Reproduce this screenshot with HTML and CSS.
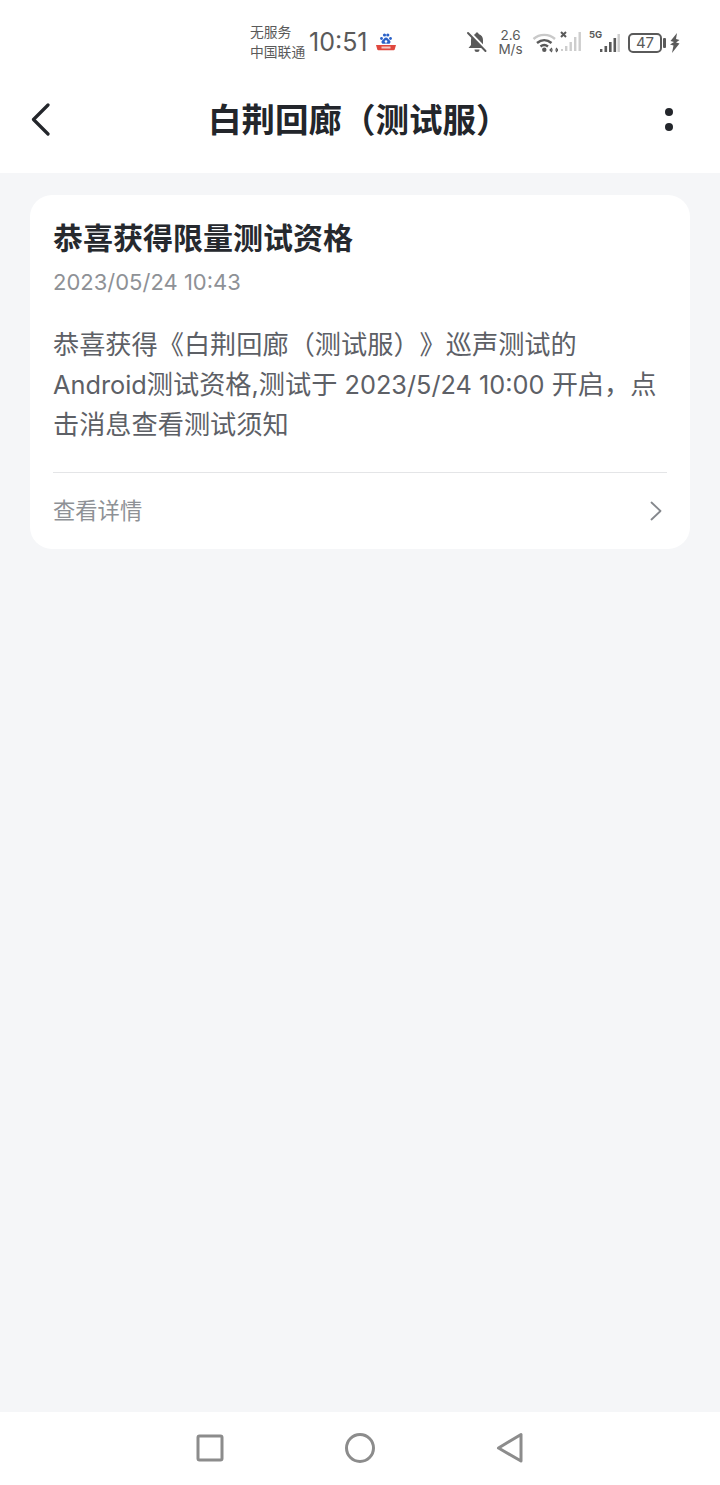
FILE: index.html
```html
<!DOCTYPE html>
<html lang="zh">
<head>
<meta charset="utf-8">
<title>白荆回廊（测试服）</title>
<link rel="stylesheet" href="styles.css">
</head>
<body>
<div class="phone">
  <header class="top">
    <div class="status">
      <div class="carrier"><span>无服务</span><span>中国联通</span></div>
      <div class="time">10:51</div>
      <svg class="baidu" width="22" height="20" viewBox="0 0 22 20">
        <circle cx="6.500" cy="6.500" r="1.400" fill="#2b62c8"/><circle cx="15.500" cy="6.500" r="1.400" fill="#2b62c8"/><circle cx="9.500" cy="3" r="1.600" fill="#2b62c8"/><circle cx="12.800" cy="3" r="1.600" fill="#2b62c8"/>
        <path d="M11 5.500c2 0 2.200 2 3.800 3 1.400 1 .6 3.500-1.300 3.300-1-.1-1.600-.4-2.500-.4s-1.500.3-2.500.4C6.600 12 5.800 9.500 7.200 8.500c1.600-1 1.800-3 3.800-3z" fill="#2b62c8"/>
        <circle cx="11" cy="9.500" r="1.300" fill="#fff"/>
        <path d="M1 13h20l-1.300 4.500q-.2.700-1 .7H3.300q-.8 0-1-.7z" fill="#e0483e"/>
        <rect x="6.500" y="14.500" width="9" height="2" fill="#f6c9c5"/>
      </svg>
      <svg class="ic-bell" width="22" height="24" viewBox="0 0 22 24">
        <path d="M11 2.500c-1 0-1.600.7-1.600 1.500C6.500 4.800 5 7.200 5 10v5l-2.500 3h17L17 15v-5c0-2.800-1.500-5.200-4.400-6 0-.8-.6-1.500-1.600-1.500z" fill="#5a5a5a"/>
        <path d="M8.500 19.500h5a2.500 2.500 0 0 1-5 0z" fill="#5a5a5a"/>
        <path d="M3.500 2.500L20.500 20" stroke="#fff" stroke-width="3"/>
        <path d="M2 3L19.500 21" stroke="#5a5a5a" stroke-width="2" stroke-linecap="round"/>
      </svg>
      <div class="speed"><span>2.6</span><span>M/s</span></div>
      <svg class="ic-wifi" width="26" height="22" viewBox="0 0 26 22">
        <path d="M1.500 8C7.500 2.500 17 2.500 23 8" fill="none" stroke="#c9c9c9" stroke-width="2.400"/>
        <path d="M5 12c4.500-3.800 10-3.800 14.500 0" fill="none" stroke="#5a5a5a" stroke-width="2.400"/>
        <path d="M8.500 15.500c2.500-2 5-2 7.500 0" fill="none" stroke="#5a5a5a" stroke-width="2.400"/>
        <circle cx="12.300" cy="18.800" r="2.200" fill="#5a5a5a"/>
        <path d="M18.500 19h2.500M23 19h2.500M20 17l-2 2 2 2M24 17l2 2-2 2" fill="none" stroke="#5a5a5a" stroke-width="1.200"/>
      </svg>
      <svg class="ic-sig1" width="22" height="24" viewBox="0 0 22 24">
        <path d="M1 3l5 5M6 3l-5 5" stroke="#5a5a5a" stroke-width="2"/>
        <g fill="#cdcdcd"><rect x="1" y="20" width="2" height="2"/><rect x="5" y="17" width="2.400" height="5"/><rect x="9.500" y="13" width="2.400" height="9"/><rect x="14" y="8" width="2.400" height="14"/><rect x="18.500" y="3" width="2.400" height="19"/></g>
      </svg>
      <span class="fiveg">5G</span>
      <svg class="ic-sig2" width="20" height="20" viewBox="0 0 20 20">
        <rect x="0" y="16" width="2.400" height="3" fill="#5a5a5a"/><rect x="4.500" y="13" width="2.600" height="6" fill="#5a5a5a"/><rect x="9" y="9" width="2.600" height="10" fill="#5a5a5a"/><rect x="13.500" y="5" width="2.600" height="14" fill="#5a5a5a"/><rect x="17.500" y="1" width="2.400" height="18" fill="#cdcdcd"/>
      </svg>
      <div class="battery">47</div>
      <span class="nub"></span>
      <svg class="ic-bolt" width="12" height="20" viewBox="0 0 12 20">
        <path d="M8 0L1.500 8 5 9 1 11.500 4.500 12.500 3 20 10.500 10.500 7 9.500 10.500 7 7 6z" fill="#5a5a5a"/>
      </svg>
    </div>
    <nav class="bar">
      <svg class="back" width="22" height="34" viewBox="0 0 22 34">
        <path d="M18 3L3.500 17.500 18 32" fill="none" stroke="#23262b" stroke-width="3.200" stroke-linecap="round" stroke-linejoin="round"/>
      </svg>
      <h1 class="title">白荆回廊（测试服）</h1>
      <div class="more"><i></i><i></i></div>
    </nav>
  </header>
  <main class="content">
    <article class="card">
      <h2 class="card-title">恭喜获得限量测试资格</h2>
      <div class="date">2023/05/24 10:43</div>
      <p class="body">恭喜获得《白荆回廊（测试服）》巡声测试的<br><span class="lat">Android</span>测试资格<span class="lat">,</span>测试于<span class="lat"> 2023/5/24 10:00 </span>开启，点<br>击消息查看测试须知</p>
      <div class="link">
        <span class="link-text">查看详情</span>
        <svg width="14" height="20" viewBox="0 0 14 20"><path d="M2.500 1.500L11.500 10l-9 8.500" fill="none" stroke="#85888d" stroke-width="1.800" stroke-linecap="round" stroke-linejoin="round"/></svg>
      </div>
    </article>
  </main>
  <footer class="nav">
    <svg width="28" height="28" viewBox="0 0 28 28"><rect x="2" y="2" width="24" height="24" rx="1.500" fill="none" stroke="#8c8c8c" stroke-width="3"/></svg>
    <svg width="32" height="32" viewBox="0 0 32 32"><circle cx="16" cy="16" r="13.500" fill="none" stroke="#8c8c8c" stroke-width="3"/></svg>
    <svg width="28" height="32" viewBox="0 0 28 32"><path d="M25 2.500V29L2.500 16z" fill="none" stroke="#8c8c8c" stroke-width="3" stroke-linejoin="round"/></svg>
  </footer>
</div>
</body>
</html>
```

FILE: styles.css
```css
* { box-sizing: border-box; }
html, body { margin: 0; padding: 0; }
body { font-family: "Inter", "Noto Sans CJK SC", sans-serif; background: #f5f6f8; text-spacing-trim: space-all; }
.phone { width: 720px; height: 1485px; display: flex; flex-direction: column; overflow: hidden; }
.top { height: 173px; background: #fff; flex: none; }
.status { height: 82px; padding: 22px 0 0 250px; display: flex; align-items: flex-start; color: #5a5a5a; }
.carrier { display: flex; flex-direction: column; width: 59px; font-size: 13.800px; line-height: 20px; flex: none; }
.time { font-size: 25px; line-height: 41px; width: 66px; flex: none; }
.baidu { margin: 10px 0 0 0; flex: none; }
.ic-bell { margin: 8px 0 0 69px; flex: none; }
.speed { display: flex; flex-direction: column; align-items: center; font-size: 13.500px; line-height: 13.500px; width: 28px; margin: 7px 0 0 8.500px; flex: none; }
.ic-wifi { margin: 9px 0 0 7px; flex: none; }
.ic-sig1 { margin: 7px 0 0 2.500px; flex: none; }
.fiveg { font-size: 9.500px; font-weight: 700; width: 11px; margin: 7px 0 0 7px; line-height: 12px; flex: none; }
.ic-sig2 { margin: 11px 0 0 0; flex: none; }
.battery { width: 34px; height: 20px; border: 2px solid #5a5a5a; border-radius: 5px; margin: 11px 0 0 8px; font-size: 15px; line-height: 16px; text-align: center; flex: none; }
.nub { width: 3px; height: 10px; margin: 16px 0 0 1px; background: #5a5a5a; border-radius: 1px; flex: none; }
.ic-bolt { margin: 11px 0 0 2.500px; flex: none; }
.bar { height: 91px; padding: 0 47px 0 30px; display: flex; align-items: flex-start; }
.back { margin-top: 20px; flex: none; }
.title { margin: 16px 0 0 156px; font-size: 33.500px; line-height: 44px; font-weight: 700; color: #23262b; white-space: nowrap; }
.more { margin: 26px 0 0 auto; display: flex; flex-direction: column; gap: 7px; }
.more i { display: block; width: 8px; height: 8px; border-radius: 50%; background: #23262b; }
.content { flex: 1; padding: 22px 30px 0; }
.card { background: #fff; border-radius: 22px; padding: 20px 23px 0; height: 354px; }
.card-title { margin: 0; font-size: 30px; line-height: 46px; font-weight: 700; color: #26292e; }
.date { margin-top: 7px; font-size: 22px; line-height: 28px; color: #8e9196; }
.body { margin: 29px 0 0; font-size: 26.200px; line-height: 40px; color: #5d6066; }
.lat { font-size: 25.300px; }
.link { margin-top: 27px; border-top: 1px solid #e4e5e7; height: 76px; display: flex; align-items: center; justify-content: space-between; padding-right: 4px; font-size: 22.300px; color: #8e9196; }
.link-text { margin-top: -3px; }
.nav { height: 73px; flex: none; background: #fff; display: flex; align-items: center; justify-content: center; gap: 120px; padding: 0 0 1px; }
```
